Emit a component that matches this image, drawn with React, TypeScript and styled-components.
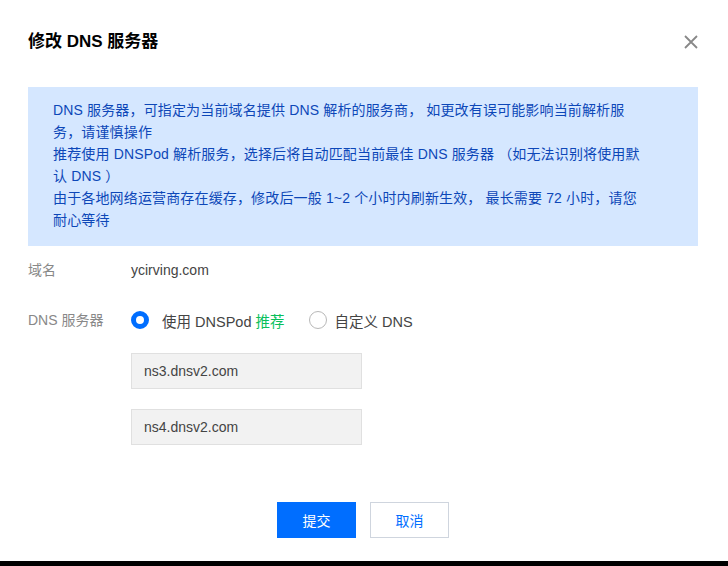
import React, { useState } from "react";
import styled, { createGlobalStyle } from "styled-components";

const GlobalStyle = createGlobalStyle`
  html, body {
    margin: 0;
    padding: 0;
    background: #000;
  }
  body {
    font-family: "Liberation Sans", Arial, "Noto Sans CJK SC", sans-serif;
    -webkit-font-smoothing: antialiased;
  }
`;

// white dialog panel, the black strip under it is just the page background
const Dialog = styled.section`
  width: 728px;
  height: 561px;
  box-sizing: border-box;
  background: #fff;
  padding: 31px 30px 0 28px;
  display: flex;
  flex-direction: column;
`;

const Header = styled.div`
  display: flex;
  align-items: center;
  justify-content: space-between;
  height: 22px;
`;

const Title = styled.h2`
  margin: 0;
  font-size: 17px;
  font-weight: bold;
  color: #000;
  line-height: 22px;
`;

const CloseButton = styled.button`
  border: none;
  background: none;
  padding: 0;
  width: 16px;
  height: 16px;
  margin-right: -1px;
  cursor: pointer;
  display: flex;
  align-items: center;
  justify-content: center;
`;

const Notice = styled.div`
  margin-top: 34px;
  background: #d5e7ff;
  padding: 12px 20px 15px 25px;
  font-size: 14px;
  line-height: 22px;
  color: #0d47b8;
  letter-spacing: 0.15px;
  p {
    margin: 0;
  }
`;

const Form = styled.div`
  display: flex;
  flex-direction: column;
`;

const Row = styled.div<{ $top: number }>`
  display: flex;
  align-items: flex-start;
  margin-top: ${(p) => p.$top}px;
`;

const Label = styled.div`
  width: 103px;
  font-size: 14px;
  line-height: 24px;
  color: #888;
`;

const Value = styled.div`
  font-size: 14px;
  line-height: 24px;
  color: #444;
`;

const Field = styled.div`
  display: flex;
  flex-direction: column;
`;

const RadioGroup = styled.div`
  display: flex;
  align-items: center;
  height: 24px;
  gap: 25px;
  margin-bottom: 1px;
`;

const RadioOption = styled.label`
  display: flex;
  align-items: center;
  gap: 13px;
  font-size: 14.5px;
  color: #444;
  cursor: pointer;
  &:last-child {
    gap: 7px;
  }
`;

const RadioDot = styled.span<{ $checked: boolean }>`
  width: 18px;
  height: 18px;
  box-sizing: border-box;
  border-radius: 50%;
  border: ${(p) => (p.$checked ? "5px solid #006eff" : "1px solid #b8b8b8")};
  background: #fff;
`;

const Recommend = styled.span`
  color: #0abf5b;
  margin-left: 4px;
`;

const Input = styled.input`
  width: 231px;
  height: 36px;
  box-sizing: border-box;
  border: 1px solid #e0e0e0;
  background: #f2f2f2;
  padding: 0 12px;
  font-size: 14px;
  font-family: inherit;
  color: #444;
  margin-top: 20px;
  outline: none;
`;

const Footer = styled.div`
  display: flex;
  justify-content: center;
  gap: 14px;
  margin-top: 57px;
`;

const Button = styled.button<{ $primary?: boolean }>`
  width: 79px;
  height: 36px;
  box-sizing: border-box;
  font-size: 14px;
  font-family: inherit;
  cursor: pointer;
  border: 1px solid ${(p) => (p.$primary ? "#006eff" : "#cfd5de")};
  background: ${(p) => (p.$primary ? "#006eff" : "#fff")};
  color: ${(p) => (p.$primary ? "#fff" : "#006eff")};
`;

const App: React.FC = () => {
  const [mode, setMode] = useState<"dnspod" | "custom">("dnspod");

  return (
    <>
      <GlobalStyle />
      <Dialog>
        <Header>
          <Title>修改 DNS 服务器</Title>
          <CloseButton aria-label="close">
            <svg width="14" height="14" viewBox="0 0 14 14">
              <path d="M1 1 L13 13 M13 1 L1 13" stroke="#888" strokeWidth="1.8" />
            </svg>
          </CloseButton>
        </Header>

        <Notice>
          <p>
            DNS 服务器，可指定为当前域名提供 DNS 解析的服务商， 如更改有误可能影响当前解析服
            <br />
            务，请谨慎操作
          </p>
          <p>
            推荐使用 DNSPod 解析服务，选择后将自动匹配当前最佳 DNS 服务器 （如无法识别将使用默
            <br />
            认 DNS ）
          </p>
          <p>
            由于各地网络运营商存在缓存，修改后一般 1~2 个小时内刷新生效， 最长需要 72 小时，请您
            <br />
            耐心等待
          </p>
        </Notice>

        <Form>
          <Row $top={12}>
            <Label>域名</Label>
            <Value>ycirving.com</Value>
          </Row>
          <Row $top={26}>
            <Label>DNS 服务器</Label>
            <Field>
              <RadioGroup>
                <RadioOption onClick={() => setMode("dnspod")}>
                  <RadioDot $checked={mode === "dnspod"} />
                  <span>
                    使用 DNSPod<Recommend>推荐</Recommend>
                  </span>
                </RadioOption>
                <RadioOption onClick={() => setMode("custom")}>
                  <RadioDot $checked={mode === "custom"} />
                  <span>自定义 DNS</span>
                </RadioOption>
              </RadioGroup>
              <Input readOnly value="ns3.dnsv2.com" />
              <Input readOnly value="ns4.dnsv2.com" />
            </Field>
          </Row>
        </Form>

        <Footer>
          <Button $primary>提交</Button>
          <Button>取消</Button>
        </Footer>
      </Dialog>
    </>
  );
};

export default App;
